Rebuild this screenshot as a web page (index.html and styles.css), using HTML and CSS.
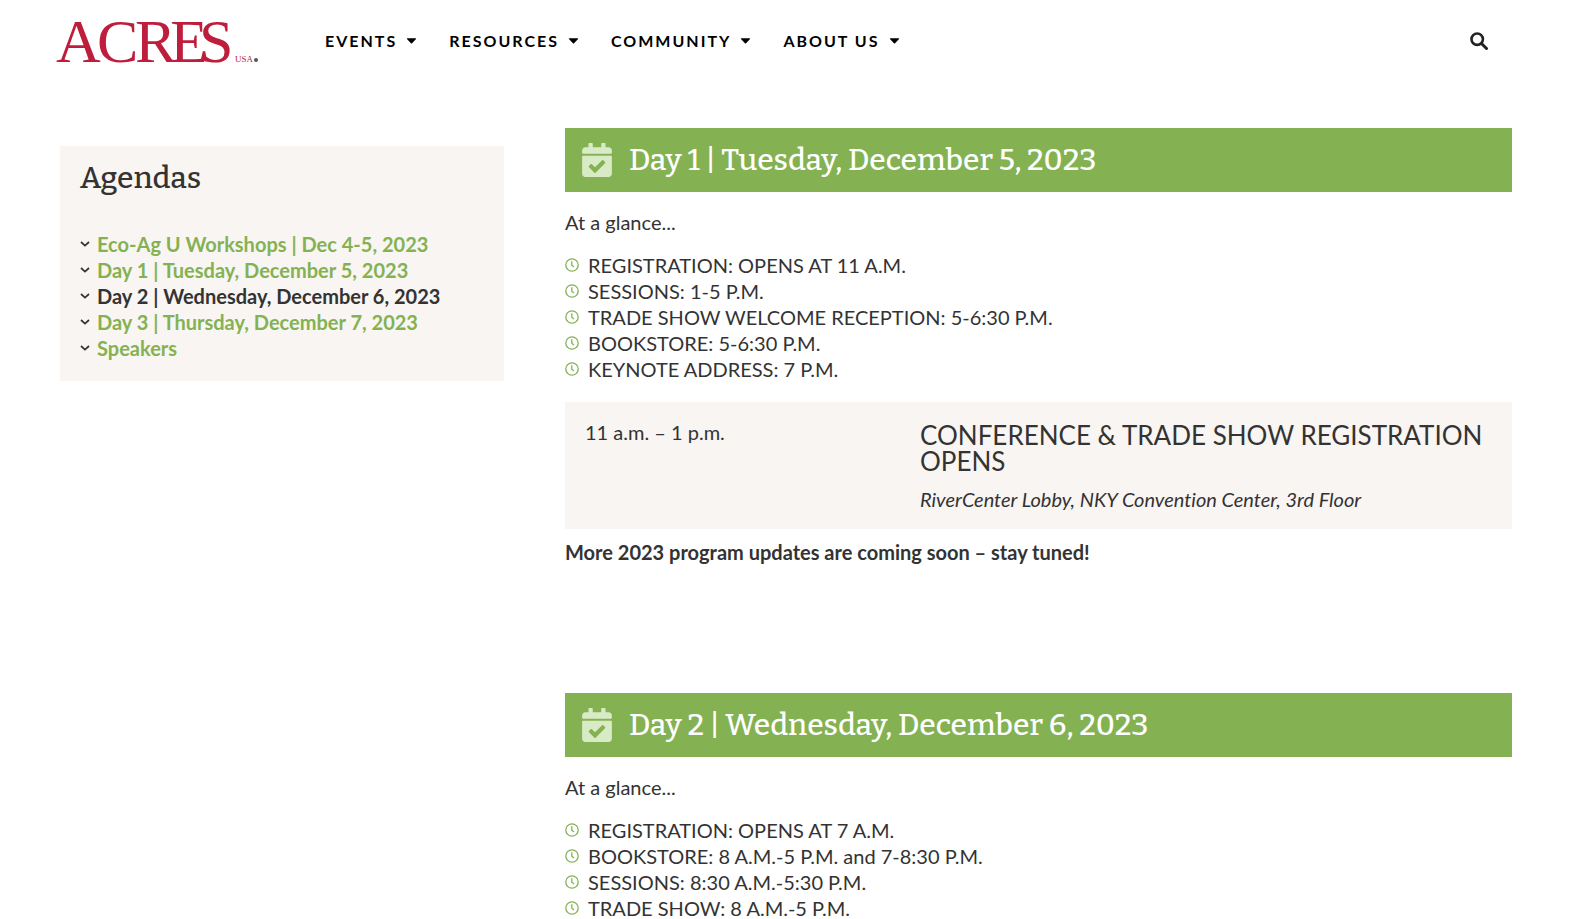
FILE: index.html
```
<!DOCTYPE html>
<html lang="en">
<head>
<meta charset="utf-8">
<meta name="viewport" content="width=device-width, initial-scale=1">
<title>Agendas | Acres USA</title>
<link rel="stylesheet" href="styles.css">
</head>
<body>
<svg class="sprite" aria-hidden="true">
  <symbol id="caret" viewBox="0 0 10 6"><path d="M.6 0h8.800c.6 0 .8.6.4 1L5.600 5.400c-.4.4-.8.4-1.200 0L.2 1C-.2.6 0 0 .6 0z" fill="currentColor"/></symbol>
  <symbol id="chevron" viewBox="0 0 10 6"><path d="M1 1l4 3.600L9 1" fill="none" stroke="currentColor" stroke-width="1.700"/></symbol>
  <symbol id="clock" viewBox="0 0 14 14"><circle cx="7" cy="7" r="6.200" fill="none" stroke="currentColor" stroke-width="1.300"/><path d="M6.800 3.300v4l2.200 1.800" fill="none" stroke="currentColor" stroke-width="1.300"/></symbol>
  <symbol id="calendar" viewBox="0 0 448 512"><path fill="currentColor" d="M436 160H12c-6.600 0-12-5.400-12-12v-36c0-26.500 21.500-48 48-48h48V12c0-6.600 5.400-12 12-12h40c6.600 0 12 5.400 12 12v52h128V12c0-6.600 5.400-12 12-12h40c6.600 0 12 5.400 12 12v52h48c26.500 0 48 21.500 48 48v36c0 6.600-5.400 12-12 12zM12 192h424c6.600 0 12 5.400 12 12v260c0 26.500-21.500 48-48 48H48c-26.500 0-48-21.500-48-48V204c0-6.600 5.400-12 12-12zm333.300 95.900l-28.200-28.400c-4.700-4.700-12.300-4.700-17-.1L194 364.700l-46.100-46.500c-4.700-4.700-12.300-4.700-17-.1l-28.400 28.200c-4.700 4.700-4.700 12.300-.1 17l82.600 83.300c4.700 4.700 12.300 4.700 17 .1l143.200-142c4.700-4.700 4.700-12.200.1-16.800z"/></symbol>
</svg>

<header class="header">
  <a class="logo" href="#" aria-label="Acres USA home">
    <svg class="logo-mark" viewBox="0 0 204 50">
      <text class="logo-name" x="0 41 79 114 143" y="46">ACRES</text>
      <text class="logo-sub" x="179" y="46">USA</text>
      <circle cx="200" cy="44" r="2" fill="#555"/>
    </svg>
  </a>
  <nav class="nav" aria-label="Main">
    <a class="nav-link" href="#">Events <svg class="caret"><use href="#caret"/></svg></a>
    <a class="nav-link" href="#">Resources <svg class="caret"><use href="#caret"/></svg></a>
    <a class="nav-link" href="#">Community <svg class="caret"><use href="#caret"/></svg></a>
    <a class="nav-link" href="#">About Us <svg class="caret"><use href="#caret"/></svg></a>
  </nav>
  <button class="search" type="button" aria-label="Search">
    <svg class="search-icon" viewBox="0 0 18 18"><circle cx="7.200" cy="7.200" r="5.700" fill="none" stroke="currentColor" stroke-width="2.600"/><path d="M11.500 11.500l5 5" stroke="currentColor" stroke-width="3" stroke-linecap="round"/></svg>
  </button>
</header>

<div class="layout">
  <aside class="sidebar">
    <h2 class="sidebar-title">Agendas</h2>
    <ul class="list">
      <li class="side-item"><svg class="chevron"><use href="#chevron"/></svg><a class="side-link" href="#">Eco-Ag U Workshops | Dec 4-5, 2023</a></li>
      <li class="side-item"><svg class="chevron"><use href="#chevron"/></svg><a class="side-link" href="#day1">Day 1 | Tuesday, December 5, 2023</a></li>
      <li class="side-item"><svg class="chevron"><use href="#chevron"/></svg><a class="side-link current" href="#day2">Day 2 | Wednesday, December 6, 2023</a></li>
      <li class="side-item"><svg class="chevron"><use href="#chevron"/></svg><a class="side-link" href="#">Day 3 | Thursday, December 7, 2023</a></li>
      <li class="side-item"><svg class="chevron"><use href="#chevron"/></svg><a class="side-link" href="#">Speakers</a></li>
    </ul>
  </aside>

  <main class="days">
    <section class="day" id="day1">
      <h2 class="banner"><svg class="calendar"><use href="#calendar"/></svg>Day 1 | Tuesday, December 5, 2023</h2>
      <p class="glance">At a glance...</p>
      <ul class="list">
        <li class="time-item"><svg class="clock"><use href="#clock"/></svg>REGISTRATION: OPENS AT 11 A.M.</li>
        <li class="time-item"><svg class="clock"><use href="#clock"/></svg>SESSIONS: 1-5 P.M.</li>
        <li class="time-item"><svg class="clock"><use href="#clock"/></svg>TRADE SHOW WELCOME RECEPTION: 5-6:30 P.M.</li>
        <li class="time-item"><svg class="clock"><use href="#clock"/></svg>BOOKSTORE: 5-6:30 P.M.</li>
        <li class="time-item"><svg class="clock"><use href="#clock"/></svg>KEYNOTE ADDRESS: 7 P.M.</li>
      </ul>
      <article class="card">
        <p class="card-time">11 a.m. – 1 p.m.</p>
        <div class="card-body">
          <h3 class="card-title">CONFERENCE &amp; TRADE SHOW REGISTRATION OPENS</h3>
          <p class="card-place">RiverCenter Lobby, NKY Convention Center, 3rd Floor</p>
        </div>
      </article>
      <p class="note">More 2023 program updates are coming soon – stay tuned!</p>
    </section>

    <section class="day" id="day2">
      <h2 class="banner"><svg class="calendar"><use href="#calendar"/></svg>Day 2 | Wednesday, December 6, 2023</h2>
      <p class="glance">At a glance...</p>
      <ul class="list">
        <li class="time-item"><svg class="clock"><use href="#clock"/></svg>REGISTRATION: OPENS AT 7 A.M.</li>
        <li class="time-item"><svg class="clock"><use href="#clock"/></svg>BOOKSTORE: 8 A.M.-5 P.M. and 7-8:30 P.M.</li>
        <li class="time-item"><svg class="clock"><use href="#clock"/></svg>SESSIONS: 8:30 A.M.-5:30 P.M.</li>
        <li class="time-item"><svg class="clock"><use href="#clock"/></svg>TRADE SHOW: 8 A.M.-5 P.M.</li>
      </ul>
    </section>
  </main>
</div>
</body>
</html>
```
FILE: styles.css
```
:root {
  --green: #84b253;
  --ink: #333;
  --panel: #f9f5f2;
  --serif: Bitter, "DejaVu Serif", serif;
}

* {
  box-sizing: border-box;
}

body,
h2,
h3,
p {
  margin: 0;
}

body {
  background: #fff;
  color: var(--ink);
  font: 20px/26px Lato, sans-serif;
  font-variant-ligatures: none;
  text-rendering: optimizeLegibility;
}

a {
  color: inherit;
  text-decoration: none;
}

svg {
  flex: none;
}

.sprite {
  display: none;
}

.header {
  display: flex;
  align-items: center;
  height: 82px;
  padding: 0 90px 0 56px;
}

.logo {
  width: 269px;
}

.logo-mark {
  display: block;
  width: 204px;
  height: 50px;
  overflow: visible;
  fill: #be1e3c;
  font-family: "Liberation Serif", serif;
}

.logo-name {
  font-size: 62px;
}

.logo-sub {
  font-size: 9px;
}

.nav {
  display: flex;
  gap: 33px;
  margin-right: auto;
}

.nav-link {
  display: flex;
  align-items: center;
  gap: 10px;
  color: #000;
  font-size: 16px;
  font-weight: 700;
  letter-spacing: 2px;
  text-transform: uppercase;
}

.caret {
  width: 9px;
  height: 6px;
}

.search {
  padding: 0;
  border: 0;
  background: none;
  color: #222;
}

.search-icon {
  display: block;
  width: 18px;
  height: 18px;
}

.layout {
  display: grid;
  grid-template-columns: 444fr 947fr;
  gap: 61px;
  align-items: start;
  padding: 46px 66px 0 60px;
}

.sidebar {
  margin-top: 18px;
  padding: 15px 20px 20px;
  background: var(--panel);
}

.sidebar-title {
  margin-bottom: 36px;
  font: 500 30px/34px var(--serif);
}

.list {
  margin: 0;
  padding: 0;
  list-style: none;
}

.side-item {
  display: flex;
  align-items: center;
  gap: 7px;
}

.side-link {
  color: var(--green);
  font-weight: 700;
}

.side-link.current {
  color: var(--ink);
}

.chevron {
  width: 10px;
  height: 6px;
}

.days {
  display: flex;
  flex-direction: column;
  gap: 128px;
}

.banner {
  display: flex;
  align-items: center;
  gap: 17px;
  min-height: 64px;
  padding: 0 17px;
  background: var(--green);
  color: #fff;
  font: 500 30px/36px var(--serif);
}

.calendar {
  width: 30px;
  height: 34px;
  color: #d9ebc6;
}

.glance {
  margin: 17px 0;
}

.time-item {
  display: flex;
  align-items: center;
  gap: 9px;
}

.clock {
  width: 14px;
  height: 14px;
  color: var(--green);
}

.card {
  display: grid;
  grid-template-columns: 335fr 572fr;
  margin: 20px 0 10px;
  padding: 20px 20px 17px;
  background: var(--panel);
}

.card-time {
  line-height: 20px;
}

.card-title {
  margin-bottom: 12px;
  font-size: 26px;
  font-weight: 400;
}

.card-place {
  font-style: italic;
}

.note {
  font-weight: 700;
}
```
